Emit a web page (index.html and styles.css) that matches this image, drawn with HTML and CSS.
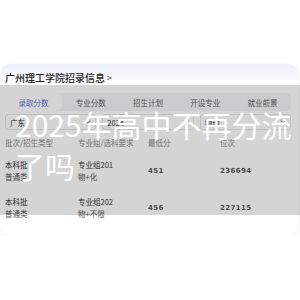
FILE: index.html
```html
<!DOCTYPE html>
<html lang="zh-CN">
<head>
<meta charset="utf-8">
<title>广州理工学院招录信息</title>
<link rel="stylesheet" href="styles.css">
</head>
<body>
<div class="page">
  <section class="card">
    <h2 class="card-title">广州理工学院招录信息<span class="arrow">&gt;</span></h2>

    <nav class="tabs">
      <span class="tab active">录取分数</span>
      <span class="tab">专业分数</span>
      <span class="tab">招生计划</span>
      <span class="tab">开设专业</span>
      <span class="tab">就业前景</span>
    </nav>

    <div class="filters">
      <div class="select"><span>广东</span><i class="chev"></i></div>
      <div class="select"><span>2024</span><i class="chev"></i></div>
      <div class="select"><span>物理</span><i class="chev"></i></div>
    </div>

    <div class="table">
      <div class="row head">
        <span>批次/招生类型</span>
        <span>专业组/选科要求</span>
        <span>最低分</span>
        <span>位次</span>
      </div>
      <div class="row">
        <span class="two"><b>本科批</b><em>普通类</em></span>
        <span class="two"><b>专业组201</b><em>物+化</em></span>
        <span class="num">451</span>
        <span class="num">236694</span>
      </div>
      <div class="row">
        <span class="two"><b>本科批</b><em>普通类</em></span>
        <span class="two"><b>专业组202</b><em>物+不限</em></span>
        <span class="num">456</span>
        <span class="num">227115</span>
      </div>
    </div>
  </section>
</div>

<div class="shade">
  <p class="caption">2025年高中不再分流了吗</p>
</div>
</body>
</html>
```

FILE: styles.css
```css
* { box-sizing: border-box; }

body {
  margin: 0;
  background: #fff;
  font-family: "Noto Sans CJK SC", "Noto Sans", sans-serif;
  color: #333;
}

.page { padding-top: 64px; }

.card {
  width: 298px;
  border-radius: 10px;
  background: linear-gradient(180deg, #edf0fb 0, #f7f8fd 12px, #fff 22px);
  box-shadow: 0 1px 4px rgba(0, 0, 0, 0.07);
  padding: 0 0 9px;
}

.card-title {
  margin: 0;
  padding: 6px 0 0 5px;
  height: 21px;
  font-size: 10px;
  line-height: 15px;
  font-weight: 500;
  color: #222;
  display: flex;
  align-items: center;
}

.arrow {
  margin-left: 2px;
  font-size: 9px;
  font-weight: 400;
  color: #333;
}

.tabs {
  margin: 8px 7px 0 5px;
  height: 18px;
  display: flex;
  background: #f4f5f7;
  border-radius: 5px;
}

.tab {
  flex: 1;
  display: flex;
  align-items: center;
  justify-content: center;
  font-size: 7.5px;
  color: #666;
  border-radius: 5px;
}

.tab.active {
  background: #fff;
  color: #5f74e6;
}

.filters {
  margin: 3px 7px 0 5px;
  display: flex;
  gap: 6px;
}

.select {
  flex: 1;
  height: 16px;
  border: 1px solid #e6e6e6;
  border-radius: 3px;
  padding: 0 5px 0 4px;
  display: flex;
  align-items: center;
  justify-content: space-between;
  font-size: 7.5px;
  color: #333;
}

.chev {
  width: 4px;
  height: 4px;
  border-right: 1px solid #999;
  border-bottom: 1px solid #999;
  transform: translateY(-1px) rotate(45deg);
}

.table { padding: 2px 0 0 5px; }

.row {
  display: grid;
  grid-template-columns: 73px 70px 72px 1fr;
  align-items: center;
  font-size: 7.5px;
  padding: 7px 0 6px;
}

.row.head {
  height: 20px;
  padding: 0;
  color: #8a8a8a;
}

.two { display: flex; flex-direction: column; }

.two b, .two em {
  font-style: normal;
  font-weight: 400;
  line-height: 12px;
}

.two b { color: #333; }
.two em { color: #555; }

.num {
  font-family: "DejaVu Sans", sans-serif;
  font-weight: 700;
  font-size: 7px;
  color: #5a5a5a;
  letter-spacing: 0.4px;
}

.shade {
  position: absolute;
  top: 85px;
  left: 0;
  width: 300px;
  height: 130px;
  background: rgba(0, 0, 0, 0.17);
}

.caption {
  margin: 0;
  padding: 19px 5px 0 15px;
  font-size: 30px;
  line-height: 41px;
  color: #fff;
  font-weight: 400;
}
```
